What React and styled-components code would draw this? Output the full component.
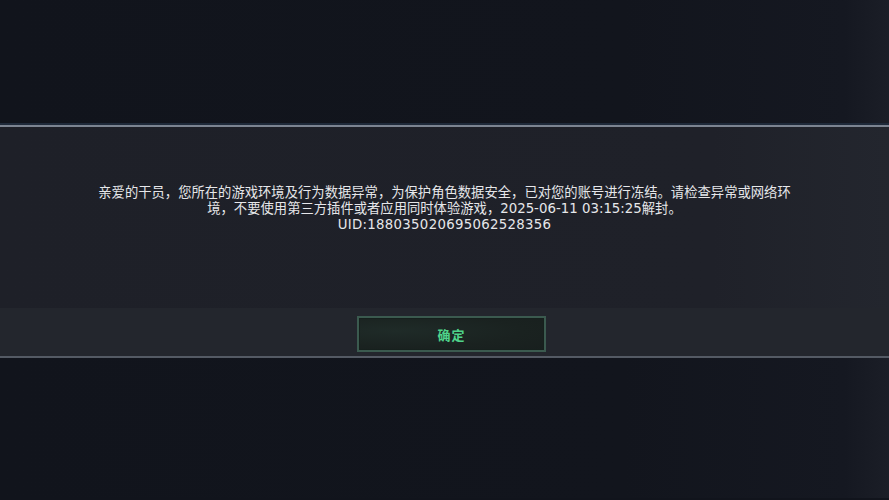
import styled, { createGlobalStyle } from "styled-components";

const GlobalStyle = createGlobalStyle`
  html, body {
    margin: 0;
    padding: 0;
    background: #11141c;
  }
`;

const Screen = styled.div`
  width: 889px;
  height: 500px;
  display: flex;
  flex-direction: column;
  background: #11141c;
  font-family: "Noto Sans CJK SC", "Noto Sans", sans-serif;
  overflow: hidden;
`;

const Backdrop = styled.div`
  height: ${(p) => p.h}px;
  flex-shrink: 0;
  background: linear-gradient(90deg, #11141c 0%, #12151d 70%, #151821 95%, #1b1e27 100%);
`;

const Dialog = styled.div`
  display: flex;
  flex-direction: column;
  flex-shrink: 0;
`;

const TopEdge = styled.div`
  height: 2px;
  background: #1f2a3a;
  border-bottom: 2px solid #7c8491;
  box-shadow: 0 1px 0 #2b303a;
`;

const Body = styled.div`
  height: 181px;
  display: flex;
  justify-content: center;
  align-items: center;
  padding-bottom: 18px;
  box-sizing: border-box;
  background: linear-gradient(90deg, #1e2028 0%, #1f2129 80%, #23262e 100%);
`;

const Message = styled.p`
  margin: 0;
  width: 698px;
  text-align: center;
  color: #e6e7ea;
  font-family: "DejaVu Sans", "Noto Sans CJK SC", sans-serif;
  font-size: 13.3px;
  letter-spacing: 0.02px;
  line-height: 16px;
`;

const Uid = styled.span`
  letter-spacing: 0.3px;
`;

const Footer = styled.div`
  height: 50px;
  display: flex;
  justify-content: center;
  align-items: center;
  background: #23262d;
  border-bottom: 2px solid #545a64;
  box-sizing: border-box;
  padding-top: 4px;
`;

const ConfirmButton = styled.button`
  width: 189px;
  height: 36px;
  margin-left: 14px;
  border: 2px solid #3b5a4f;
  background: radial-gradient(ellipse at 20% 40%, #1f2b28 0%, #1a2220 60%, #181f1e 100%);
  color: #4fd38b;
  font-family: "Noto Sans CJK SC", sans-serif;
  font-size: 13px;
  font-weight: 700;
  letter-spacing: 1px;
  cursor: pointer;
  box-shadow: inset 0 0 0 1px #16201d;
`;

export default function App() {
  return (
    <>
      <GlobalStyle />
      <Screen>
        <Backdrop h={123} />
        <Dialog>
          <TopEdge />
          <Body>
            <Message>
              亲爱的干员，您所在的游戏环境及行为数据异常，为保护角色数据安全，已对您的账号进行冻结。请检查异常或网络环境，不要使用第三方插件或者应用同时体验游戏，2025-06-11 03:15:25解封。
              <br />
              <Uid>UID:188035020695062528356</Uid>
            </Message>
          </Body>
          <Footer>
            <ConfirmButton>确定</ConfirmButton>
          </Footer>
        </Dialog>
        <Backdrop h={140} />
      </Screen>
    </>
  );
}
